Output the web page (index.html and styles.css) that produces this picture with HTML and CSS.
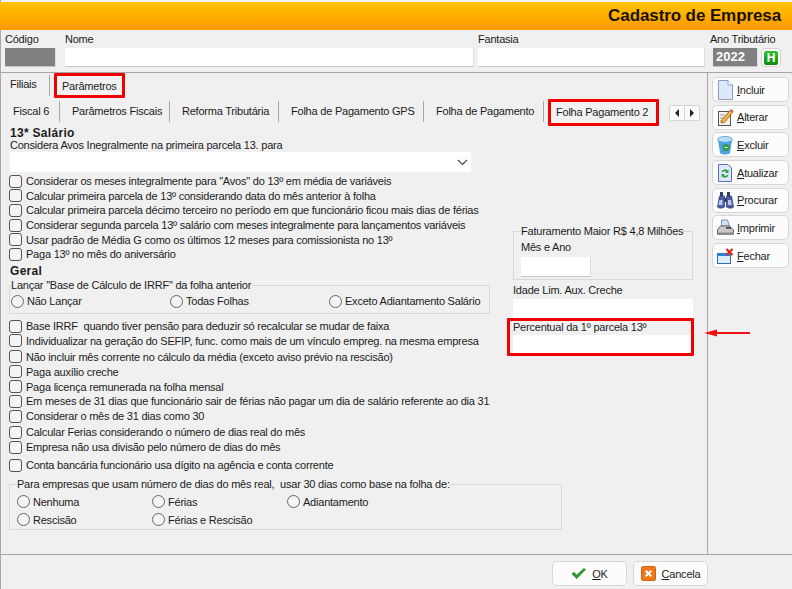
FILE: index.html
```html
<!DOCTYPE html>
<html lang="pt-BR">
<head>
<meta charset="utf-8">
<title>Cadastro de Empresa</title>
<link rel="stylesheet" href="styles.css">
</head>
<body>
<div class="window">
  <header class="titlebar"><h1>Cadastro de Empresa</h1></header>
  <section class="idrow">
    <div class="idf f-cod"><label>Código</label><div class="box gray"></div></div>
    <div class="idf f-nome"><label>Nome</label><div class="box"></div></div>
    <div class="idf f-fant"><label>Fantasia</label><div class="box"></div></div>
    <div class="idf f-ano"><label class="ano-label">Ano Tributário</label>
      <div class="anoline"><div class="box gray year">2022</div><div class="hbtn"><span>H</span></div></div>
    </div>
  </section>
  <div class="workspace">
    <main class="content">
      <nav class="tabs top">
        <span class="tab t-fil">Filiais</span><span class="sep"></span>
        <span class="tab mark t-par">Parâmetros</span>
      </nav>
      <nav class="tabs sub">
        <span class="tab w1">Fiscal 6</span><span class="sep"></span>
        <span class="tab w2">Parâmetros Fiscais</span><span class="sep"></span>
        <span class="tab w2b">Reforma Tributária</span><span class="sep"></span>
        <span class="tab w3">Folha de Pagamento GPS</span><span class="sep"></span>
        <span class="tab w4">Folha de Pagamento</span><span class="sep last"></span>
        <span class="tab mark t-fp2">Folha Pagamento 2</span>
        <span class="scroller"><i class="left"></i><i class="right"></i></span>
      </nav>
      <div class="form">
        <div class="col-left">
          <h2 class="h13">13* Salário</h2>
          <div class="txt">Considera Avos Inegralmente na primeira parcela 13. para</div>
          <div class="combo"><svg width="11" height="7" viewBox="0 0 11 7"><path d="M1 1l4.500 4.500L10 1" fill="none" stroke="#444" stroke-width="1.200"/></svg></div>
          <div class="checks first">
            <label class="ck"><input type="checkbox">Considerar os meses integralmente para "Avos" do 13º em média de variáveis</label>
            <label class="ck"><input type="checkbox">Calcular primeira parcela de 13º considerando data do mês anterior à folha</label>
            <label class="ck"><input type="checkbox">Calcular primeira parcela décimo terceiro no período em que funcionário ficou mais dias de férias</label>
            <label class="ck"><input type="checkbox">Considerar segunda parcela 13º salário com meses integralmente para lançamentos variáveis</label>
            <label class="ck"><input type="checkbox">Usar padrão de Média G como os últimos 12 meses para comissionista no 13º</label>
            <label class="ck"><input type="checkbox">Paga 13º no mês do aniversário</label>
          </div>
          <h2 class="hgeral">Geral</h2>
          <fieldset class="grp g-irrf">
            <legend>Lançar "Base de Cálculo de IRRF" da folha anterior</legend>
            <div class="radios r3">
              <label class="rd"><input type="radio" name="a">Não Lançar</label>
              <label class="rd"><input type="radio" name="a">Todas Folhas</label>
              <label class="rd"><input type="radio" name="a">Exceto Adiantamento Salário</label>
            </div>
          </fieldset>
          <div class="checks second">
            <label class="ck"><input type="checkbox">Base IRRF&nbsp; quando tiver pensão para deduzir só recalcular se mudar de faixa</label>
            <label class="ck"><input type="checkbox">Individualizar na geração do SEFIP, func. como mais de um vínculo empreg. na mesma empresa</label>
            <label class="ck sp1"><input type="checkbox">Não incluir mês corrente no cálculo da média (exceto aviso prévio na rescisão)</label>
            <label class="ck"><input type="checkbox">Paga auxílio creche</label>
            <label class="ck"><input type="checkbox">Paga licença remunerada na folha mensal</label>
            <label class="ck"><input type="checkbox">Em meses de 31 dias que funcionário sair de férias não pagar um dia de salário referente ao dia 31</label>
            <label class="ck"><input type="checkbox">Considerar o mês de 31 dias como 30</label>
            <label class="ck sp1"><input type="checkbox">Calcular Ferias considerando o número de dias real do mês</label>
            <label class="ck"><input type="checkbox">Empresa não usa divisão pelo número de dias do mês</label>
            <label class="ck sp3"><input type="checkbox">Conta bancária funcionário usa dígito na agência e conta corrente</label>
          </div>
          <fieldset class="grp g-dias">
            <legend>Para empresas que usam número de dias do mês real,&nbsp; usar 30 dias como base na folha de:</legend>
            <div class="radios r3b">
              <label class="rd"><input type="radio" name="b">Nenhuma</label>
              <label class="rd"><input type="radio" name="b">Férias</label>
              <label class="rd"><input type="radio" name="b">Adiantamento</label>
              <label class="rd"><input type="radio" name="b">Rescisão</label>
              <label class="rd"><input type="radio" name="b">Férias e Rescisão</label>
            </div>
          </fieldset>
        </div>
        <aside class="col-right">
          <fieldset class="grp g-fat">
            <legend>Faturamento Maior R$ 4,8 Milhões</legend>
            <div class="txt mes">Mês e Ano</div>
            <div class="box small"></div>
          </fieldset>
          <div class="txt idade">Idade Lim. Aux. Creche</div>
          <div class="box wide"></div>
          <div class="markbox">
            <div class="txt">Percentual da 1º parcela 13º</div>
            <div class="box inner"></div>
          </div>
        </aside>
      </div>
      <svg class="arrow" width="48" height="10" viewBox="0 0 48 10"><path d="M1 5L14 1.500V4H47V6H14V8.500Z" fill="#ee1111"/></svg>
    </main>
    <aside class="sidebar">
      <div class="btn"><svg viewBox="0 0 17 20"><path d="M1.500 .5H11L15.500 5V19.500H1.500Z" fill="#dce9fa" stroke="#8a9cc4"/><path d="M11 .5V5H15.500" fill="#fff" stroke="#8a9cc4"/></svg><span><u>I</u>ncluir</span></div>
      <div class="btn"><svg viewBox="0 0 17 20"><rect x="1.500" y="4.500" width="12" height="14" fill="#f4f4f4" stroke="#555"/><path d="M3 8h5M3 11h4M3 14h3" stroke="#999"/><path d="M4 16l1-3 8-9.500 2.500 2-8 10Z" fill="#f4b63a" stroke="#a05a12" stroke-width=".8"/><path d="M13 3.500l2.500 2 1-1.500-2.500-2Z" fill="#d9534f"/></svg><span><u>A</u>lterar</span></div>
      <div class="btn"><svg viewBox="0 0 17 20"><ellipse cx="8" cy="4.500" rx="7.500" ry="3" fill="#b8dcf4" stroke="#6fa8d8"/><path d="M1 5l2 13c2 2 8 2 10 0l2-13c-3 2.500-11 2.500-14 0Z" fill="#4da3e6"/><circle cx="9" cy="12.500" r="3.500" fill="#2f9e44"/><path d="M7.500 12.500h3" stroke="#fff"/></svg><span><u>E</u>xcluir</span></div>
      <div class="btn"><svg viewBox="0 0 17 20"><path d="M1.500 1.500H11L14.500 5V18.500H1.500Z" fill="#dfe8fa" stroke="#5b6fb5"/><path d="M4.500 9a3.500 3.500 0 0 1 6-1.500l1-1V10H8l1.200-1.200a2 2 0 0 0-3.300.5Z" fill="#2f9e44"/><path d="M11.500 12a3.500 3.500 0 0 1-6 1.500l-1 1V11H8l-1.200 1.200a2 2 0 0 0 3.300-.5Z" fill="#2f9e44"/></svg><span><u>A</u>tualizar</span></div>
      <div class="btn"><svg viewBox="0 0 17 20"><path d="M3 2h3v4H3ZM10 2h3v4h-3Z" fill="#333a66"/><path d="M2.500 6h5v11c-2 1.500-6 1.500-7 0Z" fill="#4a5fa8" stroke="#2c3566" stroke-width=".7"/><path d="M9.500 6h5l2 11c-1 1.500-5 1.500-7 0Z" fill="#4a5fa8" stroke="#2c3566" stroke-width=".7"/><path d="M7.500 8h2v4h-2Z" fill="#2c3566"/><path d="M2.500 10h3v5H1.500ZM11 10h3l.8 5H11Z" fill="#b9c8ee"/></svg><span><u>P</u>rocurar</span></div>
      <div class="btn"><svg viewBox="0 0 17 20"><path d="M4.500 2h6l2 6H4.500Z" fill="#cfe3f7" stroke="#7f93b0"/><path d="M.5 12l3-4h9l4 4v4H.5Z" fill="#c9c9c9" stroke="#666"/><path d="M.5 14.500h16V17H.5Z" fill="#8b8b8b"/><path d="M9 10h5" stroke="#333" stroke-width="1.500"/></svg><span><u>I</u>mprimir</span></div>
      <div class="btn"><svg viewBox="0 0 17 20"><rect x=".5" y="7.500" width="13" height="10" fill="#dcecfb" stroke="#2e6db5"/><rect x="0" y="7" width="14" height="3" fill="#2e7fd0"/><path d="M9.500 3l6 6M15.500 3l-6 6" stroke="#d92b20" stroke-width="2.300"/></svg><span><u>F</u>echar</span></div>
    </aside>
  </div>
  <footer class="footer">
    <div class="btn fbtn ok"><svg viewBox="0 0 16 13"><path d="M1 7l2-2 3 3 8-7 1.500 1.500L6 12Z" fill="#2b9a2b" stroke="#1c7a1c" stroke-width=".5"/></svg><span><u>O</u>K</span></div>
    <div class="btn fbtn cancel"><svg viewBox="0 0 16 16"><rect x=".5" y=".5" width="15" height="15" rx="2" fill="#f07818" stroke="#c85a08"/><path d="M5 5l6 6M11 5l-6 6" stroke="#fff" stroke-width="2.200"/></svg><span><u>C</u>ancela</span></div>
  </footer>
</div>
</body>
</html>
```

FILE: styles.css
```css
* { box-sizing: border-box; }
html, body { margin: 0; height: 100%; }
body { font: 11px/14px "Liberation Sans", Arial, sans-serif; letter-spacing: -.22px; color: #1c1c1c; background: #f0f0f0; overflow: hidden; }
.window { width: 792px; height: 589px; padding-top: 2px; display: flex; flex-direction: column; border-left: 1px solid #a8a8a8; }

.titlebar { height: 28px; margin-left: -1px; background: linear-gradient(#ffc400, #ff9800); display: flex; align-items: center; justify-content: flex-end; padding-right: 11px; flex: none; }
.titlebar h1 { margin: 0; font-size: 17px; font-weight: bold; letter-spacing: -.1px; color: #1a1200; }

.idrow { height: 43px; display: flex; padding: 2px 0 0 4px; border-bottom: 1px solid #a6a6a6; flex: none; }
.idf label { display: block; height: 16px; line-height: 15px; white-space: nowrap; }
.idf .ano-label { margin-left: -3px; }
.box { background: #fff; height: 19px; border-bottom: 1px solid #c6c6c6; border-right: 1px solid #dedede; }
.gray { background: #808080; }
.f-cod { width: 51px; margin-right: 9px; }
.f-nome { width: 409px; margin-right: 4px; }
.f-fant { width: 227px; margin-right: 8px; }
.f-ano { width: 70px; }
.anoline { display: flex; gap: 3px; }
.year { width: 45px; color: #fff; font-weight: bold; font-size: 13px; line-height: 18px; padding-left: 3px; letter-spacing: 0; }
.hbtn { width: 20px; height: 19px; border: 1px solid #d2d2d2; border-radius: 4px; background: #fff; display: flex; align-items: center; justify-content: center; }
.hbtn span { width: 14px; height: 14px; background: linear-gradient(#2fc02f, #0e8a0e); color: #fff; font-weight: bold; font-size: 12px; line-height: 14px; text-align: center; border-radius: 2px; }

.workspace { height: 482px; display: flex; border-bottom: 1px solid #a6a6a6; flex: none; }
.content { width: 706px; position: relative; flex: none; }
.sidebar { width: 85px; border-left: 1px solid #a6a6a6; padding: 4px 0 0 4px; display: flex; flex-direction: column; gap: 2.700px; }

.tabs { display: flex; align-items: center; }
.tab { white-space: nowrap; flex: none; }
.sep { width: 1px; background: #a8a8a8; flex: none; }
.top { height: 25px; padding-left: 9px; }
.top .sep { height: 21px; margin: 0 4px 0 0; }
.t-fil { width: 39px; margin-bottom: 3px; }
.mark { border: 3px solid #f00000; border-radius: 1px; background: #f2f2f2; }
.t-par { width: 71px; height: 25px; line-height: 20px; padding-left: 5px; }
.sub { height: 29px; padding-left: 12px; }
.sub .sep { height: 21px; margin: 0 12px 3px 0; }
.sub .sep.last { margin-right: 4px; }
.w1, .w2, .w2b, .w3, .w4 { margin-bottom: 3px; }
.w1 { width: 46px; }
.w2 { width: 97px; }
.w2b { width: 96px; }
.w3 { width: 132px; }
.w4 { width: 107px; }
.t-fp2 { width: 111px; height: 27px; line-height: 20px; padding-left: 5px; }
.scroller { width: 31px; height: 16px; margin: 1px 0 0 10px; border: 1px solid #d4d4d4; border-radius: 2px; background: #fafafa; display: flex; flex: none; }
.scroller i { flex: 1; display: block; position: relative; }
.scroller i + i { border-left: 1px solid #d4d4d4; }
.scroller i::after { content: ""; position: absolute; top: 3px; left: 5px; border: 4px solid transparent; }
.left::after { border-right-color: #222 !important; border-left-width: 0 !important; }
.right::after { border-left-color: #222 !important; border-right-width: 0 !important; }

.form { display: flex; }
.col-left { width: 506px; padding-left: 8px; flex: none; }
.col-right { width: 188px; padding-top: 98px; }
.txt { height: 13px; line-height: 13px; white-space: nowrap; }
.h13 { margin: 0 0 0 1px; font-size: 12px; line-height: 13px; height: 12px; letter-spacing: .3px; }
.col-left > .txt { padding-left: 1px; }
.combo { width: 461px; height: 20px; margin: 0 0 0 1px; background: #fff; display: flex; align-items: center; justify-content: flex-end; padding-right: 3px; }
.checks { display: flex; flex-direction: column; }
.first { margin-top: 2px; }
.ck { display: flex; align-items: center; height: 14.600px; white-space: nowrap; flex: none; }
.second .ck { height: 14.900px; }
.ck input, .rd input { appearance: none; -webkit-appearance: none; margin: 0; flex: none; width: 13px; height: 13px; background: #f4f4f4; border: 1px solid #555; }
.ck input { border-radius: 3px; margin-right: 4px; }
.rd input { border-radius: 50%; margin-right: 3px; border-color: #666; }
.sp1 { margin-top: 1px; }
.sp3 { margin-top: 3px; }
.hgeral { margin: 3px 0 0 1px; font-size: 12px; line-height: 13px; height: 13px; letter-spacing: .3px; }
.grp { margin: 0; padding: 0; border: 1px solid #d9d9d9; min-width: 0; }
.grp legend { padding: 0; line-height: 13px; white-space: nowrap; }
.g-irrf { width: 481px; height: 35px; margin-top: 1px; }
.g-irrf legend { margin-left: 1px; }
.radios { display: grid; }
.r3 { grid-template-columns: 159px 159px 150px; padding: 2px 0 0 1px; }
.rd { display: flex; align-items: center; height: 15px; white-space: nowrap; }
.second { margin-top: 5px; }
.g-dias { width: 553px; height: 52px; margin-top: 6px; }
.g-dias legend { margin-left: 7px; }
.r3b { grid-template-columns: 135px 135px 135px; padding: 3px 0 0 7px; row-gap: 3px; }

.g-fat { width: 180px; height: 55px; margin-left: 6px; padding-left: 7px; }
.mes { height: 15px; padding-top: 3px; }
.small { width: 70px; height: 20px; margin-top: 4px; }
.idade { margin: 4px 0 0 6px; height: 15px; }
.wide { width: 180px; height: 20px; margin-left: 6px; border: 0; }
.markbox { width: 187px; height: 38px; margin-top: -1px; border: 3px solid #f00000; border-radius: 1px; padding: 0 0 0 3px; flex: none; }
.inner { width: 178px; height: 18px; border: 0; margin-top: 1px; }

.arrow { position: absolute; left: 702px; top: 255px; }

.btn { display: flex; align-items: center; background: #fcfcfc; border: 1px solid #d6d6d6; border-radius: 5px; width: 77px; height: 25px; padding-left: 4px; gap: 3px; flex: none; }
.btn svg { width: 17px; height: 20px; flex: none; }
.btn span { white-space: nowrap; }
.footer { flex: 1; display: flex; padding: 6px 0 0 551px; gap: 6px; }
.fbtn { justify-content: center; gap: 6px; padding: 0; width: 75px; height: 25px; }
.fbtn svg { width: 15px; height: 15px; }
```
